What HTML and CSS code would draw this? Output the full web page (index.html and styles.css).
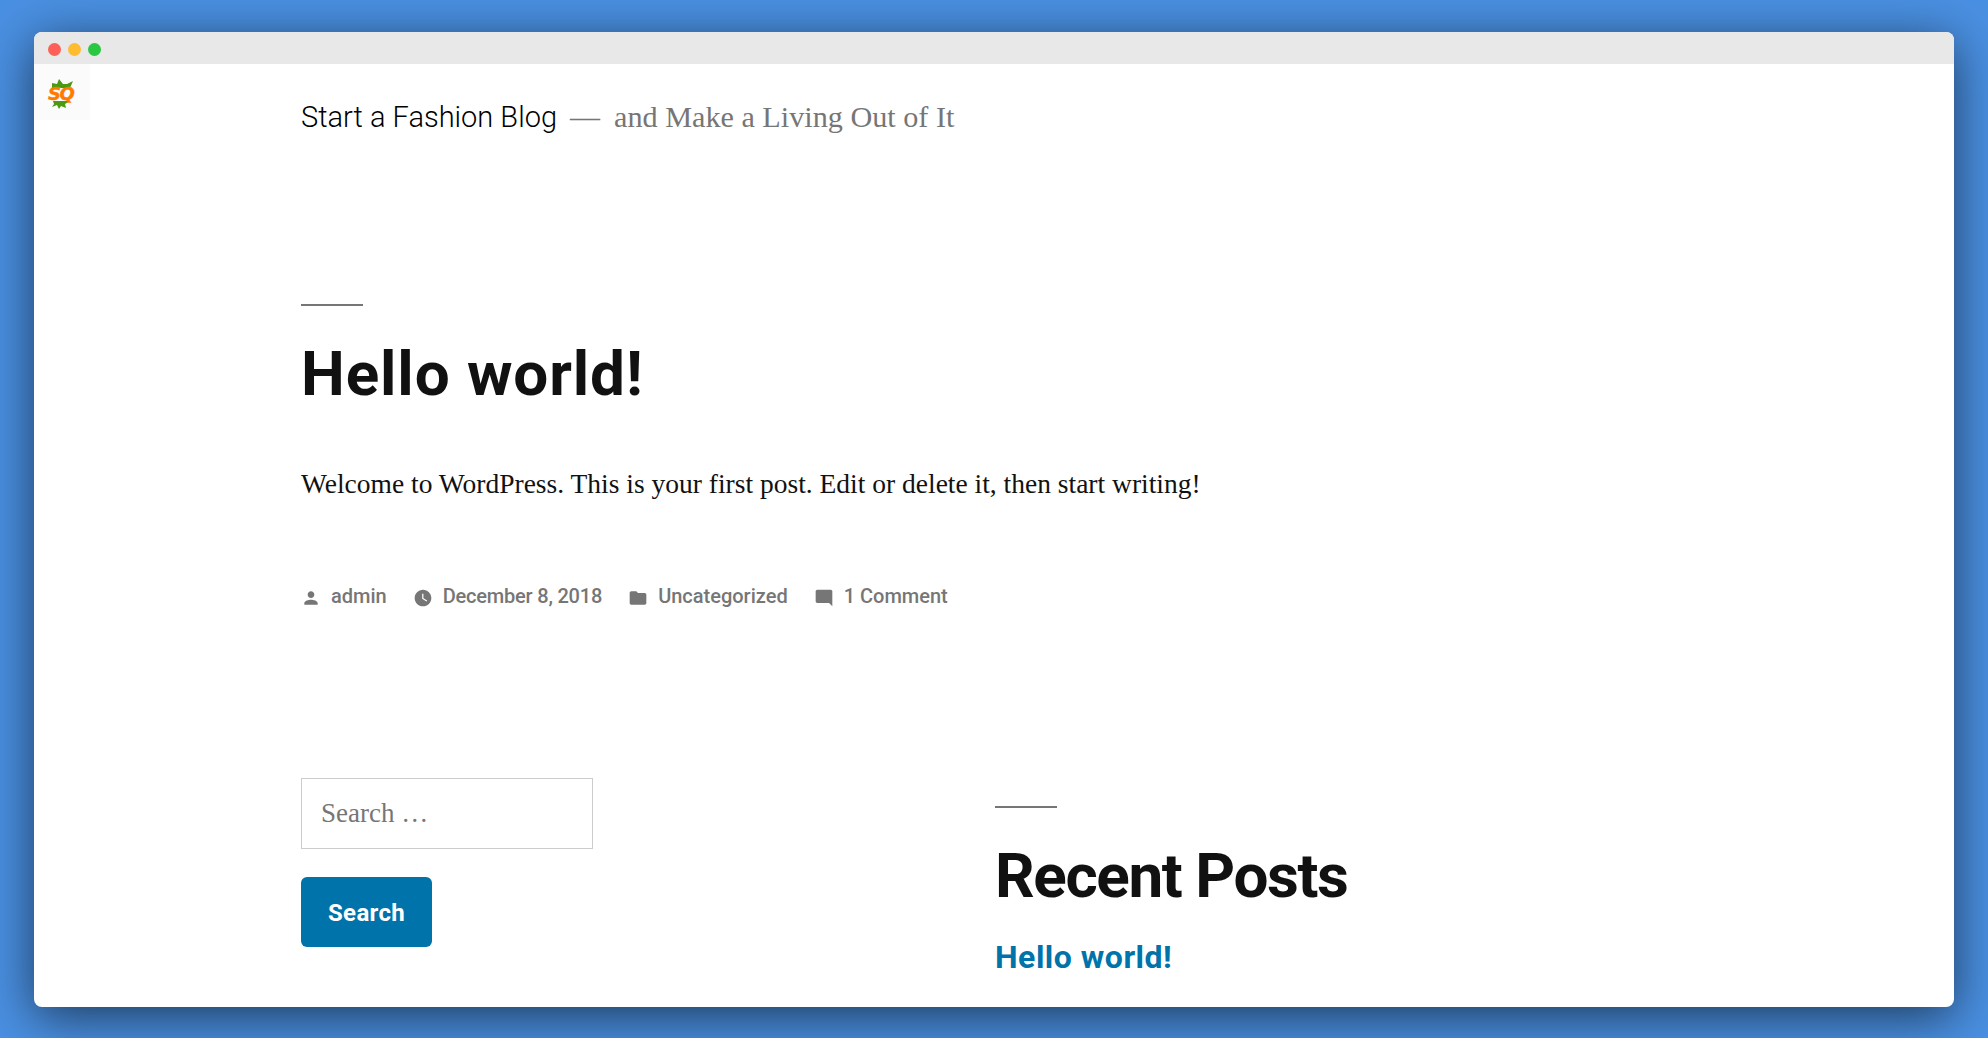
FILE: index.html
```html
<!DOCTYPE html>
<html dir="ltr" lang="en">
  <head>
    <meta charset="utf-8" />
    <title>Start a Fashion Blog</title>
    <link rel="stylesheet" href="styles.css">
  </head>
  <body>
    <div class="window">
      <div class="titlebar">
        <span class="dot dot-red"></span>
        <span class="dot dot-yellow"></span>
        <span class="dot dot-green"></span>
      </div>
      <div class="page">
        <div class="logo-tile">
          <svg class="logo-leaves" viewBox="0 0 56 56" width="56" height="56">
            <polygon fill="#4c9a0f" points="18,19 23,20 25,15 29,20 33,20 39,17 36,24 18,24" />
            <polygon fill="#4c9a0f" points="19,37 36,37 31,40 32,44 27,42 25,45 23,41 18,43 20,40" />
          </svg>
          <span class="logo-text">SQ</span>
        </div>

        <header class="site-header">
          <a class="site-title" href="#">Start a Fashion Blog</a>
          <span class="site-dash">—</span>
          <span class="site-desc">and Make a Living Out of It</span>
        </header>

        <article class="post">
          <div class="rule"></div>
          <h1 class="post-title">Hello world!</h1>
          <p class="post-text">Welcome to WordPress. This is your first post. Edit or delete it, then start writing!</p>
          <div class="meta">
            <span class="meta-item">
              <svg viewBox="0 0 24 24" width="20" height="20"><path d="M12 12c2.21 0 4-1.79 4-4s-1.79-4-4-4-4 1.79-4 4 1.79 4 4 4zm0 2c-2.67 0-8 1.34-8 4v2h16v-2c0-2.66-5.33-4-8-4z" /></svg>
              admin
            </span>
            <span class="meta-item meta-date">
              <svg viewBox="0 0 24 24" width="20" height="20"><path d="M12 2C6.5 2 2 6.5 2 12s4.5 10 10 10 10-4.5 10-10S17.5 2 12 2zm4.2 14.2L11 13V7h1.5v5.2l4.5 2.7-.8 1.3z" /></svg>
              December 8, 2018
            </span>
            <span class="meta-item">
              <svg viewBox="0 0 24 24" width="20" height="20"><path d="M10 4H4c-1.1 0-2 .9-2 2v12c0 1.1.9 2 2 2h16c1.1 0 2-.9 2-2V8c0-1.1-.9-2-2-2h-8l-2-2z" /></svg>
              Uncategorized
            </span>
            <span class="meta-item">
              <svg viewBox="0 0 24 24" width="20" height="20"><path d="M21.99 4c0-1.1-.89-2-1.99-2H4c-1.1 0-2 .9-2 2v12c0 1.1.9 2 2 2h14l4 4-.01-18z" /></svg>
              1 Comment
            </span>
          </div>
        </article>

        <section class="widgets">
          <div class="widget-search">
            <input class="search-input" type="text" placeholder="Search …" />
            <button class="search-button">Search</button>
          </div>
          <div class="widget-recent">
            <div class="rule"></div>
            <h2 class="widget-title">Recent Posts</h2>
            <a class="recent-link" href="#">Hello world!</a>
          </div>
        </section>
      </div>
    </div>
  </body>
</html>
```

FILE: styles.css
```css
html, body {
  height: 100%;
}

body {
  margin: 0;
  padding: 32px 34px 30px 34px;
  box-sizing: border-box;
  background-color: #4a90e2;
  overflow: hidden;
  font-family: Roboto, sans-serif;
  color: #111;
}

.window {
  height: 975px;
  border-radius: 8px;
  overflow: hidden;
  background-color: #fff;
  box-shadow: 0 10px 50px rgba(0, 0, 0, 0.6);
  display: flex;
  flex-direction: column;
}

.titlebar {
  height: 32px;
  box-sizing: border-box;
  flex-shrink: 0;
  background-color: #e8e8e8;
  display: flex;
  align-items: center;
  gap: 7px;
  padding: 2px 0 0 13.5px;
}

.dot {
  width: 13px;
  height: 13px;
  border-radius: 50%;
}

.dot-red { background-color: #ff5f57; }
.dot-yellow { background-color: #febc2e; }
.dot-green { background-color: #28c840; }

.page {
  position: relative;
  flex: 1;
  overflow: hidden;
  padding-left: 267px;
}

.logo-tile {
  position: absolute;
  left: 0;
  top: 0;
  width: 56px;
  height: 56px;
  background-color: #fbfbfb;
}

.logo-leaves {
  position: absolute;
  left: 0;
  top: 0;
}

.logo-text {
  position: absolute;
  left: 14px;
  top: 18px;
  font-family: "DejaVu Sans", sans-serif;
  font-size: 18px;
  line-height: 24px;
  font-weight: 700;
  font-style: italic;
  letter-spacing: -1.5px;
  color: #ff7a00;
  -webkit-text-stroke: 0.4px #ff7a00;
}

.site-header {
  display: flex;
  align-items: baseline;
  height: 69px;
  padding-top: 36px;
}

.site-title {
  font-size: 29px;
  font-weight: 300;
  color: #000;
  text-decoration: none;
}

.site-dash {
  margin-left: 13px;
  font-family: "Liberation Serif", serif;
  font-size: 30px;
  color: #767676;
}

.site-desc {
  margin-left: 14px;
  font-family: "Liberation Serif", serif;
  font-size: 30.2px;
  color: #767676;
}

.post {
  padding-top: 135px;
}

.rule {
  width: 62px;
  height: 2px;
  background-color: #767676;
}

.post-title {
  margin: 31px 0 0;
  font-size: 62px;
  line-height: 1.2;
  font-weight: 700;
  letter-spacing: 0.9px;
  color: #111;
}

.post-text {
  margin: 54px 0 0;
  font-family: "Liberation Serif", serif;
  font-size: 27.5px;
  line-height: 1.4;
  color: #111;
}

.meta {
  display: flex;
  gap: 26px;
  margin-top: 80px;
  font-size: 20px;
  font-weight: 500;
  color: #767676;
}

.meta-item {
  display: flex;
  align-items: center;
  gap: 10px;
}

.meta-date {
  letter-spacing: -0.2px;
}

.meta-item svg {
  fill: #767676;
  position: relative;
  top: 2px;
}

.widgets {
  display: grid;
  grid-template-columns: 694px 1fr;
  margin-top: 170px;
}

.widget-search {
  display: flex;
  flex-direction: column;
  align-items: flex-start;
  gap: 28px;
}

.search-input {
  width: 292px;
  height: 71px;
  box-sizing: border-box;
  padding: 0 19px;
  border: 1px solid #ccc;
  font-family: "Liberation Serif", serif;
  font-size: 27px;
  color: #767676;
}

.search-input::placeholder {
  color: #767676;
  opacity: 1;
}

.search-button {
  width: 131px;
  height: 70px;
  padding-top: 4px;
  border: 0;
  border-radius: 6px;
  background-color: #0073aa;
  color: #fff;
  font-family: Roboto, sans-serif;
  font-size: 24px;
  font-weight: 700;
  letter-spacing: 0.3px;
}

.widget-recent {
  padding-top: 28px;
}

.widget-title {
  margin: 31px 0 0;
  font-size: 62px;
  line-height: 1.2;
  font-weight: 700;
  letter-spacing: -1.4px;
  color: #111;
}

.recent-link {
  display: block;
  margin-top: 25px;
  font-size: 32px;
  font-weight: 700;
  letter-spacing: 0.5px;
  color: #0073aa;
  text-decoration: none;
}
```
